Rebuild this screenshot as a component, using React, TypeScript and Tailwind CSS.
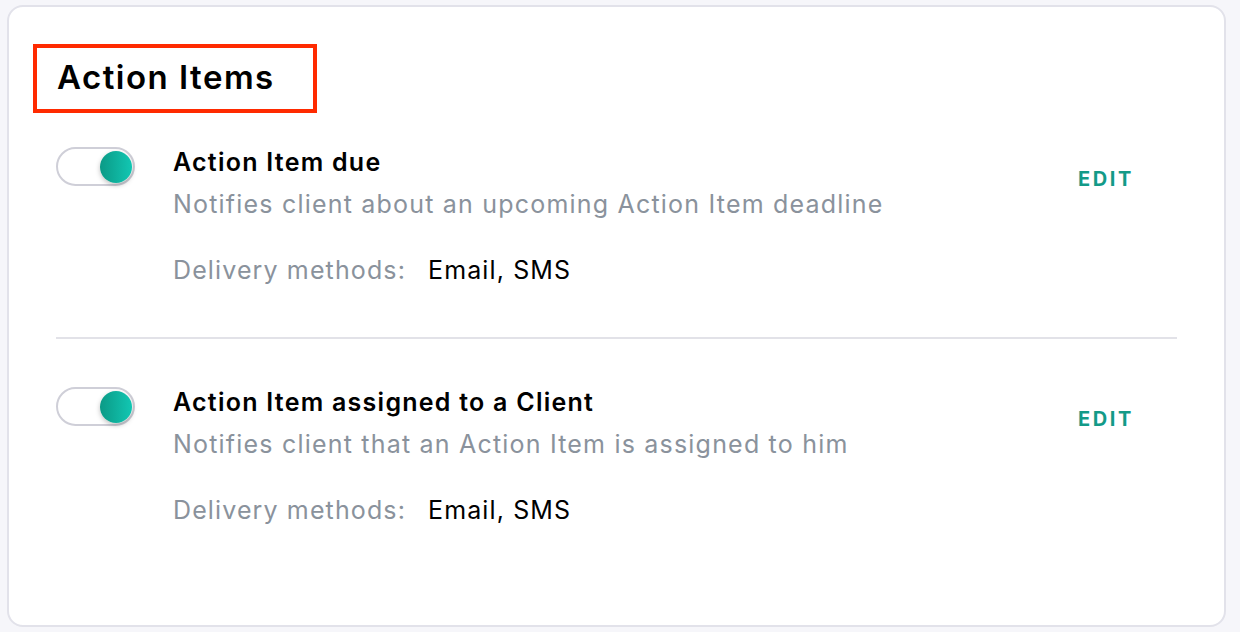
import React, { useState } from 'react';

interface ActionItem {
  id: string;
  title: string;
  description: string;
  methods: string;
}

const items: ActionItem[] = [
  {
    id: 'due',
    title: 'Action Item due',
    description: 'Notifies client about an upcoming Action Item deadline',
    methods: 'Email, SMS',
  },
  {
    id: 'assigned',
    title: 'Action Item assigned to a Client',
    description: 'Notifies client that an Action Item is assigned to him',
    methods: 'Email, SMS',
  },
];

function Toggle({ on, onChange }: { on: boolean; onChange: () => void }) {
  return (
    <button
      onClick={onChange}
      className="relative w-[79px] h-[39px] shrink-0 rounded-full border-2 border-[#cfcfd8] bg-white"
    >
      <span
        className={
          'absolute top-[2px] w-[32px] h-[32px] rounded-full shadow-[0_2px_5px_rgba(0,0,0,0.25)] ' +
          (on
            ? 'right-[1px] bg-gradient-to-r from-[#0b9a86] to-[#12c7b3]'
            : 'left-[1px] bg-[#d6d6de]')
        }
      />
    </button>
  );
}

function Row({ item }: { item: ActionItem }) {
  const [on, setOn] = useState(true);
  return (
    <div className="flex items-start">
      <Toggle on={on} onChange={() => setOn(!on)} />
      <div className="flex-1 ml-[38px]">
        <div className="text-[25px] leading-[30px] font-semibold tracking-[0.05em] text-black">
          {item.title}
        </div>
        <div className="mt-[12px] text-[25px] leading-[30px] tracking-[0.048em] text-[#8a929c]">
          {item.description}
        </div>
        <div className="mt-[36px] flex text-[25px] leading-[30px] tracking-[0.045em]">
          <span className="text-[#8a929c]">Delivery methods:</span>
          <span className="ml-[22px] text-black">{item.methods}</span>
        </div>
      </div>
      <button className="mt-[18px] mr-[43px] text-[20px] leading-[28px] font-bold tracking-[0.13em] text-[#139a88]">
        EDIT
      </button>
    </div>
  );
}

export default function App() {
  return (
    <div
      className="w-[1240px] h-[632px] bg-[#f6f6fa] pt-[5px] pl-[7px]"
      style={{ fontFamily: 'Inter, "Noto Sans", sans-serif' }}
    >
      <div className="w-[1219px] h-[622px] bg-white border-2 border-[#e2e2ea] rounded-[16px]">
        <div className="ml-[24px] mt-[37px] w-[284px] h-[69px] border-4 border-[#ff2a00] flex items-center pl-[20px]">
          <h2 className="text-[33px] font-semibold tracking-[0.045em] text-black leading-none -mt-[3px]">
            Action Items
          </h2>
        </div>
        <div className="px-[47px] mt-[34px]">
          <Row item={items[0]} />
          <div className="h-[2px] bg-[#e2e2e8] mt-[52px] mb-[48px]" />
          <Row item={items[1]} />
        </div>
      </div>
    </div>
  );
}
